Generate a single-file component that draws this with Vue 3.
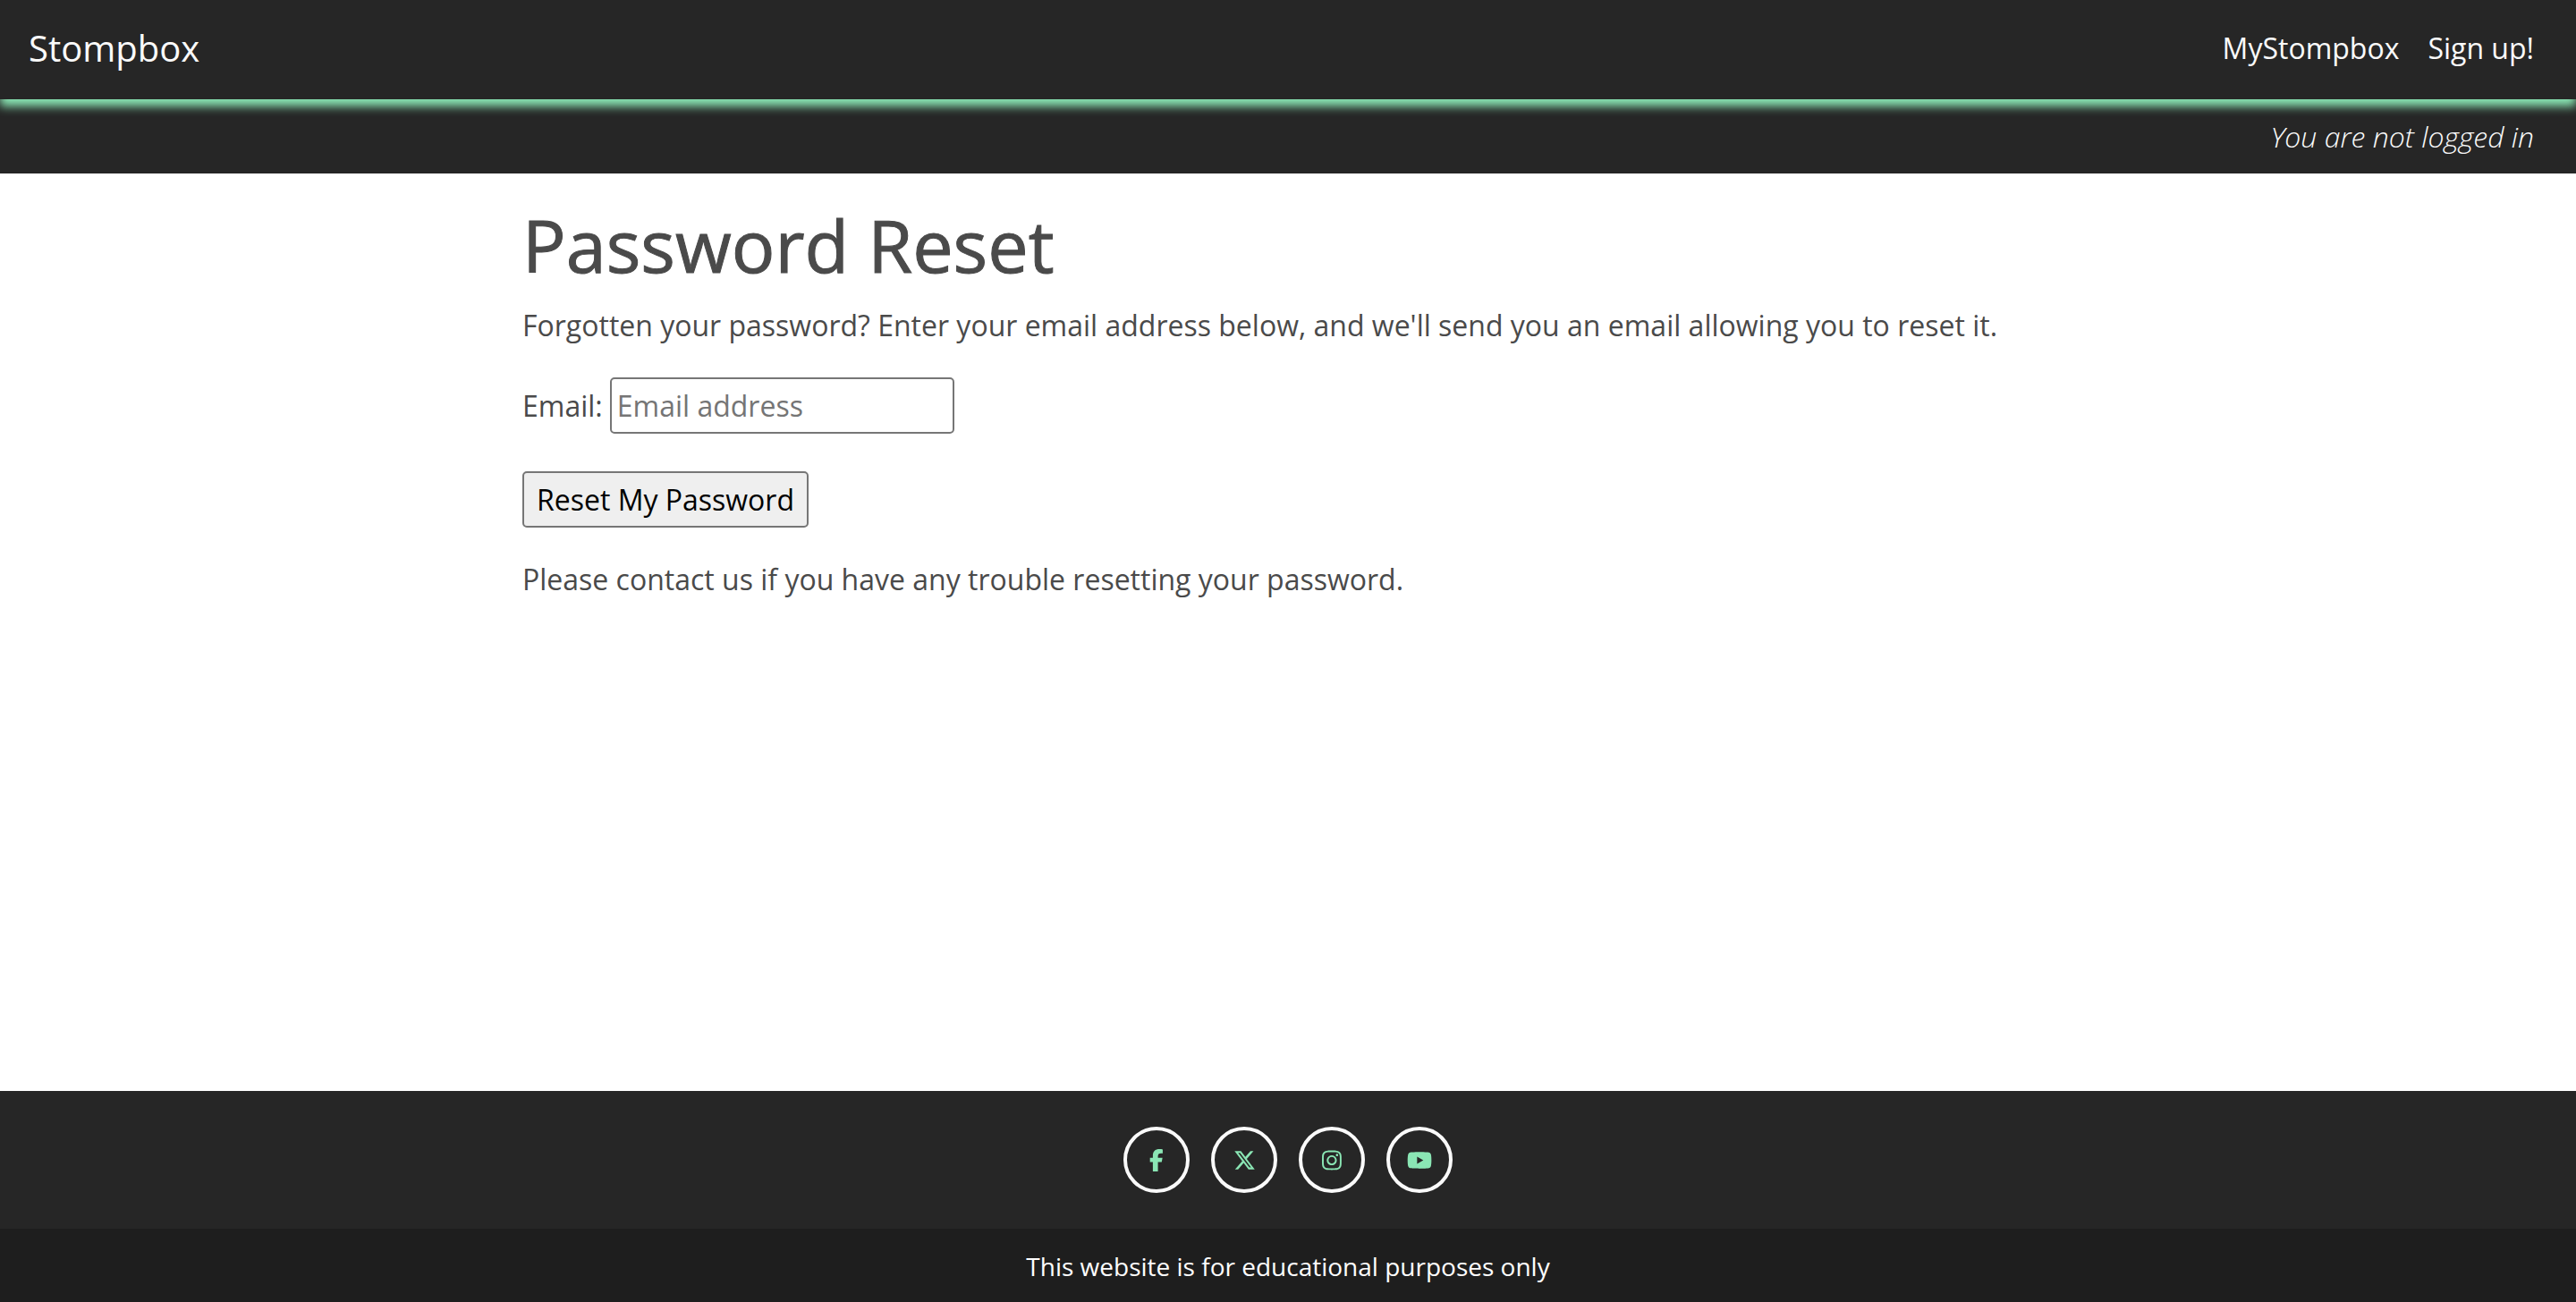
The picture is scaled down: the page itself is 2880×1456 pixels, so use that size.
<script setup>
const navLinks = ['MyStompbox', 'Sign up!']

const socials = [
  {
    name: 'Facebook',
    box: '0 0 320 512',
    path: 'M80 299.3V512H196V299.3h86.5l18-97.8H196V166.9c0-51.7 20.3-71.5 72.7-71.5c16.3 0 29.4 .4 37 1.2V7.9C291.4 4 256.4 0 236.2 0C129.3 0 80 50.5 80 159.4v42.1H14v97.8H80z'
  },
  {
    name: 'X',
    box: '0 0 512 512',
    path: 'M389.2 48h70.6L305.6 224.2 487 464H345L233.7 318.6 106.5 464H35.8L200.7 275.5 26.8 48H172.4L272.9 180.9 389.2 48zM364.4 421.8h39.1L151.1 88h-42L364.4 421.8z'
  },
  {
    name: 'Instagram',
    box: '0 0 448 512',
    path: 'M224.1 141c-63.6 0-114.9 51.3-114.9 114.9s51.3 114.9 114.9 114.9S339 319.5 339 255.9 287.7 141 224.1 141zm0 189.6c-41.1 0-74.7-33.5-74.7-74.7s33.5-74.7 74.7-74.7 74.7 33.5 74.7 74.7-33.6 74.7-74.7 74.7zm146.4-194.3c0 14.9-12 26.8-26.8 26.8-14.9 0-26.8-12-26.8-26.8s12-26.8 26.8-26.8 26.8 12 26.8 26.8zm76.1 27.2c-1.7-35.9-9.9-67.7-36.2-93.9-26.2-26.2-58-34.4-93.9-36.2-37-2.1-147.9-2.1-184.9 0-35.8 1.7-67.6 9.9-93.9 36.1s-34.4 58-36.2 93.9c-2.1 37-2.1 147.9 0 184.9 1.7 35.9 9.9 67.7 36.2 93.9s58 34.4 93.9 36.2c37 2.1 147.9 2.1 184.9 0 35.9-1.7 67.7-9.9 93.9-36.2 26.2-26.2 34.4-58 36.2-93.9 2.1-37 2.1-147.8 0-184.8zM398.8 388c-7.8 19.6-22.9 34.7-42.6 42.6-29.5 11.7-99.5 9-132.1 9s-102.7 2.6-132.1-9c-19.6-7.8-34.7-22.9-42.6-42.6-11.7-29.5-9-99.5-9-132.1s-2.6-102.7 9-132.1c7.8-19.6 22.9-34.7 42.6-42.6 29.5-11.7 99.5-9 132.1-9s102.7-2.6 132.1 9c19.6 7.8 34.7 22.9 42.6 42.6 11.7 29.5 9 99.5 9 132.1s2.7 102.7-9 132.1z'
  },
  {
    name: 'YouTube',
    box: '0 0 576 512',
    path: 'M549.655 124.083c-6.281-23.65-24.787-42.276-48.284-48.597C458.781 64 288 64 288 64S117.22 64 74.629 75.486c-23.497 6.322-42.003 24.947-48.284 48.597-11.412 42.867-11.412 132.305-11.412 132.305s0 89.438 11.412 132.305c6.281 23.65 24.787 41.5 48.284 47.821C117.22 448 288 448 288 448s170.78 0 213.371-11.486c23.497-6.321 42.003-24.171 48.284-47.821 11.412-42.867 11.412-132.305 11.412-132.305s0-89.438-11.412-132.305zm-317.51 213.508V175.185l142.739 81.205-142.739 81.201z'
  }
]
</script>

<template>
  <div class="page">
    <header>
      <nav class="navbar">
        <a class="brand" href="#">Stompbox</a>
        <div class="links">
          <a v-for="link in navLinks" :key="link" href="#">{{ link }}</a>
        </div>
      </nav>
      <p class="status">You are not logged in</p>
    </header>

    <main class="container">
      <div class="column">
        <h1>Password Reset</h1>
        <p>Forgotten your password? Enter your email address below, and we'll send you an email allowing you to reset it.</p>
        <form @submit.prevent>
          <div class="field">
            <label for="email">Email:</label>
            <input id="email" type="email" placeholder="Email address" />
          </div>
          <button type="submit">Reset My Password</button>
        </form>
        <p>Please contact us if you have any trouble resetting your password.</p>
      </div>
    </main>

    <footer>
      <div class="socials">
        <a v-for="s in socials" :key="s.name" href="#" :aria-label="s.name">
          <svg :viewBox="s.box" aria-hidden="true"><path :d="s.path" /></svg>
        </a>
      </div>
      <p class="notice">This website is for educational purposes only</p>
    </footer>
  </div>
</template>

<style>
body {
  margin: 0;
  background: #fff;
}
</style>

<style scoped>
.page {
  display: flex;
  flex-direction: column;
  min-height: 100vh;
  font-family: "Open Sans", sans-serif;
  font-size: 32px;
  font-weight: 400;
  line-height: 48px;
  color: #4a4a4a;
}

p,
h1 {
  margin: 0;
}

a {
  color: #fafafa;
  text-decoration: none;
}

.navbar {
  position: relative;
  display: flex;
  align-items: center;
  justify-content: space-between;
  box-sizing: border-box;
  min-height: 111px;
  padding: 0 47px 3px 32px;
  background: #262626;
  box-shadow: 0 8px 10px #8ae6b4;
}

.brand {
  font-size: 40px;
}

.links {
  display: flex;
  gap: 32px;
}

.status {
  padding: 18px 47px 17px;
  background: #262626;
  color: #fafafa;
  font-style: italic;
  font-weight: 300;
  text-align: right;
}

.container {
  flex: 1;
  display: grid;
  grid-template-columns: 1fr 4fr 1fr;
  box-sizing: border-box;
  width: 100%;
  max-width: 2640px;
  margin: 0 auto;
}

.column {
  grid-column: 2;
  padding: 32px 24px;
}

h1 {
  margin-bottom: 18px;
  font-size: 81px;
  font-weight: 500;
  line-height: 96px;
  -webkit-text-stroke: 1px currentColor;
}

form {
  display: flex;
  flex-direction: column;
  align-items: flex-start;
  gap: 42px;
  margin: 34px 0;
}

.field {
  display: flex;
  align-items: center;
  gap: 8px;
}

input,
button {
  box-sizing: border-box;
  height: 63px;
  border: 2px solid #767676;
  border-radius: 5px;
  font: inherit;
}

input {
  width: 385px;
  padding: 2px 6px;
  background: #fff;
}

input::placeholder {
  color: #757575;
}

button {
  padding: 2px 14px;
  background: #efefef;
  color: #000;
}

.socials {
  display: flex;
  justify-content: center;
  gap: 24px;
  padding: 40px 0;
  background: #262626;
}

.socials a {
  display: flex;
  align-items: center;
  justify-content: center;
  box-sizing: border-box;
  width: 74px;
  height: 74px;
  border: 4px solid #fafafa;
  border-radius: 50%;
}

.socials svg {
  height: 25px;
  fill: #8ae6b4;
}

.notice {
  padding: 21px 0 19px;
  background: #1e1e1e;
  color: #fff;
  font-size: 28px;
  line-height: 42px;
  text-align: center;
}
</style>
